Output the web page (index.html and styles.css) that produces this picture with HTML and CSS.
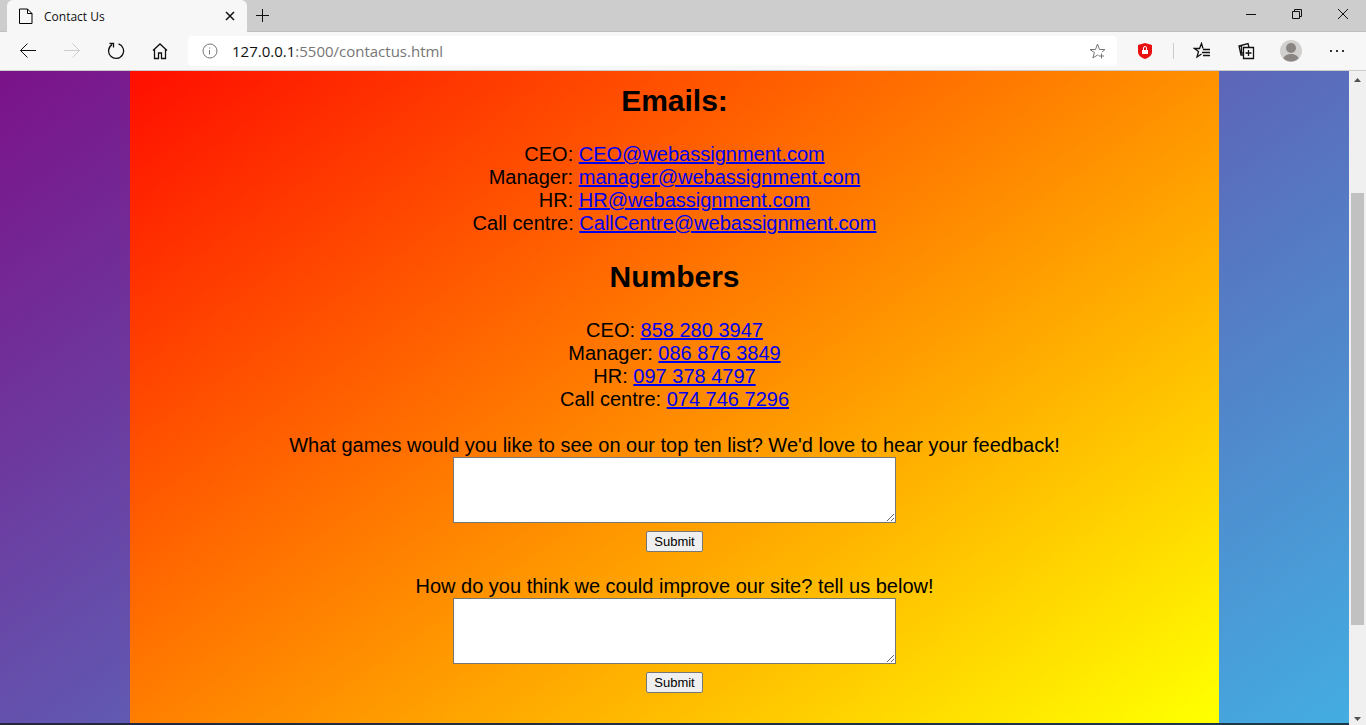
FILE: index.html
```html
<!DOCTYPE html>
<html lang="en">
<head>
<meta charset="utf-8">
<title>Contact Us</title>
<link rel="stylesheet" href="styles.css">
</head>
<body>
<div class="window">
  <header class="tabbar">
    <div class="tab">
      <svg class="page-icon" width="14" height="17" viewBox="0 0 14 17"><path d="M.5 1h8l4.500 4.500v10H.5zM8.500 1v4.500H13"/></svg>
      <span class="tab-title">Contact Us</span>
      <button class="tab-close" aria-label="Close tab"><svg width="10" height="10" viewBox="0 0 10 10"><path d="M1 1l8 8M9 1l-8 8"/></svg></button>
    </div>
    <button class="icon new-tab" aria-label="New tab"><svg width="13" height="13" viewBox="0 0 13 13"><path d="M6.500 0v13M0 6.500h13"/></svg></button>
    <div class="window-controls">
      <button class="icon" aria-label="Minimize"><svg width="12" height="12" viewBox="0 0 12 12"><path d="M1 6.500h10"/></svg></button>
      <button class="icon" aria-label="Restore"><svg width="12" height="12" viewBox="0 0 12 12"><path d="M1.500 3.500h7v7h-7zM3.500 3.500v-2h7v7h-2"/></svg></button>
      <button class="icon" aria-label="Close"><svg width="12" height="12" viewBox="0 0 12 12"><path d="M1 1l10 10M11 1L1 11"/></svg></button>
    </div>
  </header>
  <nav class="toolbar">
    <button class="icon" aria-label="Back"><svg width="18" height="18" viewBox="0 0 18 18"><path d="M17 8.500H1.500M8.500 1.500l-7 7 7 7"/></svg></button>
    <button class="icon disabled" aria-label="Forward" disabled><svg width="18" height="18" viewBox="0 0 18 18"><path d="M1 8.500h15.500M9.500 1.500l7 7-7 7"/></svg></button>
    <button class="icon" aria-label="Refresh"><svg width="18" height="18" viewBox="0 0 18 18"><path class="bold" d="M11.500 1.800A7.500 7.500 0 1 1 5 2.600M2.500 1.500h4v4"/></svg></button>
    <button class="icon" aria-label="Home"><svg width="18" height="18" viewBox="0 0 18 18"><path class="bold" d="M2 8.500L9 2l7 6.500M3.500 7.500v9h4V11h3v5.500h4v-9"/></svg></button>
    <div class="address">
      <svg class="info" width="16" height="16" viewBox="0 0 16 16"><circle cx="8" cy="8" r="7"/><path d="M7.500 7v4.500M7.500 4.500v1"/></svg>
      <a class="url" href="#content"><span class="host">127.0.0.1</span>:5500/contactus.html</a>
      <button class="favourite" aria-label="Add to favourites"><svg width="17" height="17" viewBox="0 0 17 17"><path d="M9.500 12.500l-1-.5-4.600 3 1.500-5.500L1 6.500h5.500L8.500 1l2 5.500H16l-3 2.500M12.500 10.500v5M10 13h5"/></svg></button>
    </div>
    <button class="icon shield" aria-label="Password protection"><svg width="16" height="18" viewBox="0 0 16 18"><path class="shield-body" d="M8 1l7 2v6.500c0 4-3 6-7 7.500-4-1.500-7-3.500-7-7.500V3z"/><path class="lock" d="M5 8h6v4H5z"/><path class="shackle" d="M6.500 8V6a1.500 1.500 0 0 1 3 0v2"/></svg></button>
    <span class="divider"></span>
    <div class="tools">
      <button class="icon" aria-label="Favourites"><svg width="18" height="18" viewBox="0 0 18 18"><path class="bold" d="M8.500 12l-4.500 3 1.500-5.500L1.500 6.500h5L8.500 1.500l1.500 5M10 7.500h7M9 10.500h8M10 13.500h7"/></svg></button>
      <button class="icon" aria-label="Collections"><svg width="18" height="18" viewBox="0 0 18 18"><path class="bold" d="M6.500 5.500h10v11h-10zM11.500 8v6M8.500 11h6M12 5.500l-1-4-9 2.500 2 9h2.500M4.500 3.500v7.500h2"/></svg></button>
      <button class="icon wide" aria-label="Profile"><svg width="22" height="22" viewBox="0 0 22 22"><circle class="avatar-bg" cx="11" cy="11" r="11"/><circle class="avatar" cx="11" cy="8" r="5"/><path class="avatar" d="M3.500 18.500c1-6 14-6 15 0-4 4-11 4-15 0z"/></svg></button>
      <button class="icon wide" aria-label="Settings and more"><svg width="18" height="18" viewBox="0 0 18 18"><path class="dots" d="M2 8h2v2H2zM8 8h2v2H8zM14 8h2v2h-2z"/></svg></button>
    </div>
  </nav>
  <div class="viewport">
    <div class="page">
      <main class="content" id="content">
        <h2>Emails:</h2>
        <p>CEO: <a href="mailto:CEO@webassignment.com">CEO@webassignment.com</a><br>
        Manager: <a href="mailto:manager@webassignment.com">manager@webassignment.com</a><br>
        HR: <a href="mailto:HR@webassignment.com">HR@webassignment.com</a><br>
        Call centre: <a href="mailto:CallCentre@webassignment.com">CallCentre@webassignment.com</a></p>
        <h2>Numbers</h2>
        <p>CEO: <a href="tel:8582803947">858 280 3947</a><br>
        Manager: <a href="tel:0868763849">086 876 3849</a><br>
        HR: <a href="tel:0973784797">097 378 4797</a><br>
        Call centre: <a href="tel:0747467296">074 746 7296</a></p>
        <form class="feedback">
          <label for="games">What games would you like to see on our top ten list? We'd love to hear your feedback!</label>
          <textarea id="games"></textarea>
          <button type="button">Submit</button>
        </form>
        <form class="feedback">
          <label for="improve">How do you think we could improve our site? tell us below!</label>
          <textarea id="improve"></textarea>
          <button type="button">Submit</button>
        </form>
      </main>
      <div class="footer-edge"></div>
    </div>
    <div class="scrollbar">
      <svg width="7" height="4" viewBox="0 0 7 4"><path d="M0 4l3.500-4L7 4z"/></svg>
      <div class="track"><div class="thumb"></div></div>
      <svg width="7" height="4" viewBox="0 0 7 4"><path d="M0 0l3.500 4L7 0z"/></svg>
    </div>
  </div>
</div>
</body>
</html>
```
FILE: styles.css
```css
* { box-sizing: border-box; }
body { margin: 0; font-family: "Liberation Sans", Arial, sans-serif; }
svg { display: block; fill: none; stroke: currentColor; }
.window { display: flex; flex-direction: column; height: 100vh; overflow: hidden; }

.tabbar { display: flex; height: 32px; flex: none; padding-left: 7px; background: #cdcdcd; border-bottom: 1px solid #c0c0c0; }
.tab { display: flex; align-items: center; width: 240px; height: 32px; padding: 0 12px; background: #f7f7f7; border-radius: 6px 6px 0 0; }
.tab-title { flex: 1; margin-left: 11px; font: 12px "Open Sans", sans-serif; color: #111; }
.tab-close, .favourite, .icon { display: flex; align-items: center; justify-content: center; padding: 0; border: 0; background: none; color: #111; }
.tab-close svg { stroke-width: 1.5; }
.bold { stroke-width: 1.3; }
.new-tab { width: 31px; }
.window-controls { display: flex; margin-left: auto; padding-bottom: 3px; }
.window-controls .icon { width: 46px; }

.toolbar { display: flex; align-items: center; flex: none; height: 39px; padding-left: 6px; background: #f7f7f7; border-bottom: 1px solid #ccc; }
.toolbar .icon { flex: none; width: 44px; height: 32px; }
.toolbar .wide { width: 46px; }
.toolbar .disabled { color: #ccc; }
.address { display: flex; align-items: center; flex: 1; height: 30px; margin-left: 6px; padding: 0 11px 0 14px; background: #fff; border-radius: 4px; }
.info { color: #767676; }
.url { flex: 1; margin-left: 14px; font: 15px "Open Sans", sans-serif; color: #767676; text-decoration: none; }
.host { color: #111; }
.favourite { color: #767676; }
.toolbar .shield { width: 56px; }
.shield-body { fill: #e81010; stroke: none; }
.lock { fill: #fff; stroke: none; }
.shackle { stroke: #fff; }
.divider { width: 1px; height: 16px; background: #ccc; }
.tools { display: flex; margin-left: 6px; padding-right: 6px; }
.avatar-bg { fill: #d2d0ce; stroke: none; }
.avatar { fill: #8a8583; stroke: none; }
.dots { fill: #333; stroke: none; }

.viewport { display: flex; flex: 1; min-height: 0; }
.page { display: flex; flex-direction: column; flex: 1; background: linear-gradient(145deg, #7b1289, #43ade1); }
.content { flex: 1; width: calc(80% + 10px); margin: 0 auto; text-align: center; font-size: 20px; line-height: 23px; background: linear-gradient(145deg, #ff0e00, #ffff00 99%); }
.content h2 { margin: 12px 0 24px; font-size: 30px; line-height: 36px; }
.content p { margin: 0 0 23px; }
.content p + h2 { margin-top: 24px; }
.content a { color: #00e; }
.feedback { display: flex; flex-direction: column; align-items: center; margin-bottom: 23px; }
.feedback textarea { width: 443px; max-width: 100%; height: 66px; border: 1px solid #767676; background: #fff; }
.feedback button { height: 21px; margin-top: 8px; padding: 1px 7px; border: 1px solid #767676; border-radius: 2px; background: #efefef; color: #000; font: 13px "Liberation Sans", Arial, sans-serif; }
.footer-edge { flex: none; height: 2px; background: linear-gradient(90deg, #252540, #1c3948); }
.scrollbar { display: flex; flex-direction: column; align-items: center; flex: none; width: 17px; padding: 7px 0 4px; background: #f0f0f0; }
.scrollbar svg { fill: #505050; stroke: none; }
.track { display: flex; flex-direction: column; flex: 1; width: 13px; padding: 111px 0 92px; }
.thumb { flex: 1; background: #c1c1c1; }
```
